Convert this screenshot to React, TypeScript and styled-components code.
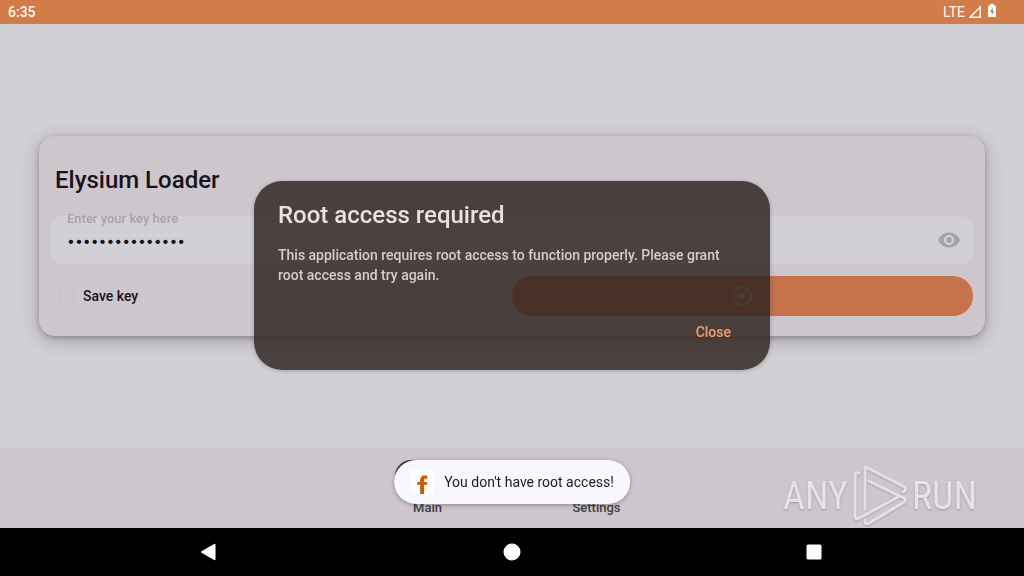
import React, { useState } from "react";
import styled, { createGlobalStyle } from "styled-components";

const textFont = `Roboto, "Liberation Sans", sans-serif`;

const GlobalStyle = createGlobalStyle`
  * { box-sizing: border-box; }
  body { margin: 0; background: #d1d0d5; font-family: ${textFont}; color: #17131a; }
  button { border: 0; padding: 0; background: none; font: inherit; color: inherit; }
  p, h1, h2 { margin: 0; }
`;

const Screen = styled.div`
  display: flex;
  flex-direction: column;
  min-height: 100vh;
`;

const StatusBar = styled.header`
  display: flex;
  align-items: center;
  justify-content: space-between;
  height: 24px;
  padding: 0 27px 0 8px;
  background: #d27c49;
  color: #fff6ee;
  font-size: 14px;
`;

const Clock = styled.span`
  font-weight: 500;
`;

const StatusIcons = styled.div`
  display: flex;
  align-items: center;
  gap: 4px;
`;

const Content = styled.main`
  display: flex;
  flex: 1;
  flex-direction: column;
  justify-content: center;
  padding: 0 39px;
`;

const Card = styled.section`
  padding: 28px 12px 20px;
  border-radius: 16px;
  background: #cdc7cd;
  box-shadow: 0 2px 5px rgba(60, 50, 60, 0.26), 0 4px 18px rgba(60, 50, 60, 0.32);
`;

const CardTitle = styled.h1`
  padding-left: 4px;
  margin-bottom: 20px;
  font-size: 24px;
  font-weight: 500;
  line-height: 32px;
`;

const KeyField = styled.div`
  position: relative;
  display: flex;
  align-items: center;
  height: 48px;
  padding: 0 12px 0 16px;
  border-radius: 12px;
  background: #d1d0d5;
`;

const KeyLabel = styled.label`
  position: absolute;
  top: -5px;
  left: 16px;
  color: #a8a2a9;
  font-size: 13px;
  font-weight: 500;
  line-height: 16px;
`;

const KeyInput = styled.input`
  flex: 1;
  min-width: 0;
  padding: 0;
  border: 0;
  outline: 0;
  background: none;
  color: #17131a;
  font-family: Inter, ${textFont};
  font-size: 14px;
`;

const IconButton = styled.button`
  display: flex;
`;

const Actions = styled.div`
  display: grid;
  grid-template-columns: 1fr 1fr;
  align-items: center;
  margin-top: 12px;
`;

const SaveKey = styled.label`
  display: flex;
  align-items: center;
  gap: 8px;
  padding-left: 8px;
  font-size: 14px;
  font-weight: 500;
`;

const Checkbox = styled.input`
  appearance: none;
  width: 16px;
  height: 18px;
  margin: 0;
  border: 2px solid #c8c2c8;
  border-radius: 3px;
`;

const LoginButton = styled.button`
  display: flex;
  align-items: center;
  justify-content: center;
  height: 40px;
  border-radius: 20px;
  background: #c5734a;
  color: #c9aca4;
`;

const TabBar = styled.nav`
  display: flex;
  justify-content: center;
  height: 80px;
  padding-top: 12px;
  background: #cdc7cd;
`;

const Tab = styled.button`
  display: flex;
  flex-direction: column;
  align-items: center;
  gap: 8px;
  width: 169px;
  color: #443e45;
  font-size: 13px;
  font-weight: 500;
  line-height: 16px;
`;

const Indicator = styled.span<{ $active?: boolean }>`
  width: 66px;
  height: 32px;
  border-radius: 16px;
  background: ${(p) => (p.$active ? "#3f3a40" : "transparent")};
`;

const SystemBar = styled.footer`
  display: flex;
  align-items: center;
  justify-content: center;
  height: 48px;
  background: #000;
`;

const SystemButton = styled.button`
  display: flex;
  justify-content: center;
  width: 303px;
`;

const DialogLayer = styled.div`
  position: fixed;
  inset: 24px 0 49px;
  display: flex;
  align-items: center;
  justify-content: center;
`;

const Dialog = styled.div`
  display: flex;
  flex-direction: column;
  width: 516px;
  max-width: 90%;
  padding: 18px 24px;
  border-radius: 28px;
  background: rgba(49, 37, 33, 0.84);
  box-shadow: 0 1px 4px rgba(50, 40, 50, 0.3);
  color: #d8cad2;
`;

const DialogTitle = styled.h2`
  color: #ece0e0;
  font-size: 24px;
  font-weight: 500;
  line-height: 32px;
`;

const DialogText = styled.p`
  margin-top: 14px;
  font-size: 14px;
  font-weight: 500;
  line-height: 20px;
`;

const CloseButton = styled.button`
  align-self: flex-end;
  height: 40px;
  margin: 27px 3px 0 0;
  padding: 0 12px;
  color: #f0a070;
  font-size: 14px;
  font-weight: 500;
`;

const Toast = styled.div`
  position: fixed;
  bottom: 72px;
  left: 50%;
  display: flex;
  align-items: center;
  gap: 10px;
  width: max-content;
  height: 44px;
  padding: 0 16px;
  border-radius: 22px;
  background: #f9f7fe;
  box-shadow: 0 1px 4px rgba(40, 30, 40, 0.4);
  transform: translateX(-50%);
  color: #1b1b20;
  font-size: 14px;
`;

const Watermark = styled.div`
  position: fixed;
  right: 47px;
  bottom: 48px;
  display: flex;
  align-items: center;
  gap: 4px;
  height: 64px;
  color: #e6e2e5;
  font-family: "Liberation Sans Narrow", "Roboto Condensed", Roboto, sans-serif;
  font-size: 38px;
  line-height: 64px;
  text-shadow: 0 1px 2px rgba(110, 100, 110, 0.5);
`;

const SignalIcon = () => (
  <svg width="14" height="14" viewBox="0 0 14 14" fill="none" stroke="currentColor" strokeWidth="1.5">
    <path d="M1 12.2H11.2V2Z" />
  </svg>
);

const BatteryIcon = () => (
  <svg width="10" height="16" viewBox="0 0 10 16">
    <path d="M3 0h4v1.5h1.3q.7 0 .7.7v10.1q0 .7-.7.7H1.7q-.7 0-.7-.7V2.2q0-.7.7-.7H3Z" fill="currentColor" />
    <path d="M5.7 3.5 3 7.8h1.7v3.4L7.2 7H5.7Z" fill="#8d8f9d" />
  </svg>
);

const EyeIcon = () => (
  <svg width="24" height="24" viewBox="0 0 24 24" fill="#a5a3a9">
    <path d="M12 4.5C7 4.5 2.73 7.61 1 12c1.73 4.39 6 7.5 11 7.5s9.27-3.11 11-7.5c-1.73-4.39-6-7.5-11-7.5zM12 17c-2.76 0-5-2.24-5-5s2.24-5 5-5 5 2.24 5 5-2.24 5-5 5zm0-8c-1.66 0-3 1.34-3 3s1.34 3 3 3 3-1.34 3-3-1.34-3-3-3z" />
  </svg>
);

const TargetIcon = () => (
  <svg width="24" height="24" viewBox="0 0 24 24">
    <circle cx="11" cy="12" r="9" fill="none" stroke="currentColor" strokeWidth="2" />
    <circle cx="11" cy="12" r="3" fill="currentColor" />
  </svg>
);

const AppIcon = () => (
  <svg width="24" height="24" viewBox="0 0 24 24">
    <rect width="24" height="24" rx="2" fill="#fefdfe" />
    <path d="M10 24V15H7v-3h3V8.5l2.5-3H17V9h-3v3h3v3h-3v9Z" fill="#c95c0c" />
    <path d="M14 8h3v1h-3zM7 14h3v1H7zM14 14h3v1h-3z" fill="#e5832d" />
  </svg>
);

const PlayLogo = () => (
  <svg width="56" height="64" viewBox="0 0 56 64" fill="none" strokeLinecap="round" strokeLinejoin="round">
    <g stroke="#a39ca3" strokeWidth="5" opacity=".4">
      <path d="M7 10Q3 8 3 13V53Q3 57 7 55L46 33" />
      <path d="M13 45V6Q13 3 16 5L53 24Q55 27 51 29" />
      <path d="M17 18 52 35Q55 37 52 39L17 60Q13 62 13 57" />
    </g>
    <g stroke="#e4e0e3" strokeWidth="3">
      <path d="M7 9Q3 7 3 12V52Q3 56 7 54L46 33" />
      <path d="M13 45V5Q13 2 16 4L53 23Q55 26 51 28" />
      <path d="M17 17 52 34Q55 36 52 38L17 59Q13 61 13 56" />
    </g>
  </svg>
);

export default function App() {
  const [visible, setVisible] = useState(false);
  const [open, setOpen] = useState(true);

  return (
    <Screen>
      <GlobalStyle />
      <StatusBar>
        <Clock>6:35</Clock>
        <StatusIcons>
          LTE
          <SignalIcon />
          <BatteryIcon />
        </StatusIcons>
      </StatusBar>

      <Content>
        <Card>
          <CardTitle>Elysium Loader</CardTitle>
          <KeyField>
            <KeyLabel htmlFor="key">Enter your key here</KeyLabel>
            <KeyInput id="key" type={visible ? "text" : "password"} defaultValue="elysium-key-001" />
            <IconButton type="button" aria-label="Show key" onClick={() => setVisible(!visible)}>
              <EyeIcon />
            </IconButton>
          </KeyField>
          <Actions>
            <SaveKey>
              <Checkbox type="checkbox" />
              Save key
            </SaveKey>
            <LoginButton type="button" aria-label="Load">
              <TargetIcon />
            </LoginButton>
          </Actions>
        </Card>
      </Content>

      <TabBar>
        <Tab type="button">
          <Indicator $active />
          Main
        </Tab>
        <Tab type="button">
          <Indicator />
          Settings
        </Tab>
      </TabBar>

      <SystemBar>
        <SystemButton type="button" aria-label="Back">
          <svg width="18" height="18" viewBox="0 0 18 18">
            <path d="M2 9 14.5 1.8V16.2Z" fill="#fff" stroke="#fff" strokeWidth="2" strokeLinejoin="round" />
          </svg>
        </SystemButton>
        <SystemButton type="button" aria-label="Home">
          <svg width="18" height="18" viewBox="0 0 18 18">
            <circle cx="9" cy="9" r="8.5" fill="#fff" />
          </svg>
        </SystemButton>
        <SystemButton type="button" aria-label="Overview">
          <svg width="18" height="18" viewBox="0 0 18 18">
            <rect x="0.5" y="1.5" width="15" height="15" rx="1.5" fill="#fff" />
          </svg>
        </SystemButton>
      </SystemBar>

      {open && (
        <DialogLayer>
          <Dialog role="dialog" aria-labelledby="dialog-title">
            <DialogTitle id="dialog-title">Root access required</DialogTitle>
            <DialogText>
              This application requires root access to function properly. Please grant root access and try again.
            </DialogText>
            <CloseButton type="button" onClick={() => setOpen(false)}>
              Close
            </CloseButton>
          </Dialog>
        </DialogLayer>
      )}

      <Toast role="status">
        <AppIcon />
        You don't have root access!
      </Toast>

      <Watermark>
        <span>ANY</span>
        <PlayLogo />
        <span>RUN</span>
      </Watermark>
    </Screen>
  );
}
